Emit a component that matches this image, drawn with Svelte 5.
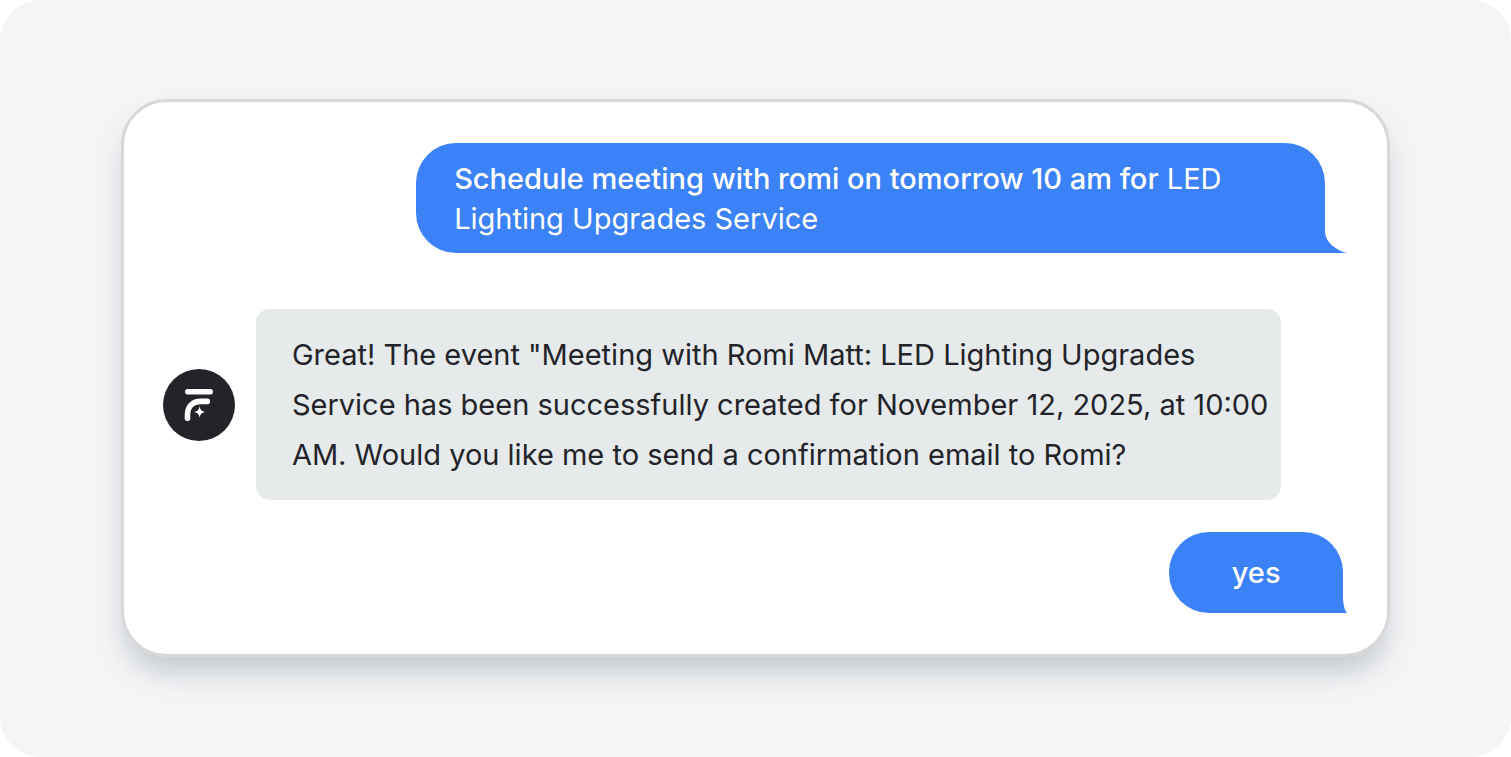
<script lang="ts">
	interface Message {
		from: 'user' | 'bot';
		strong?: string;
		lines: string[];
		short?: boolean;
	}

	const messages: Message[] = [
		{
			from: 'user',
			strong: 'Schedule meeting with romi on tomorrow 10 am for',
			lines: ['LED', 'Lighting Upgrades Service']
		},
		{
			from: 'bot',
			lines: [
				'Great! The event "Meeting with Romi Matt: LED Lighting Upgrades',
				'Service has been successfully created for November 12, 2025, at 10:00',
				'AM. Would you like me to send a confirmation email to Romi?'
			]
		},
		{ from: 'user', strong: 'yes', lines: [], short: true }
	];
</script>

<main>
	<section class="chat" aria-label="Chat">
		{#each messages as message}
			<div class="row {message.from}">
				{#if message.from === 'bot'}
					<svg class="avatar" viewBox="0 0 72 72" role="img" aria-label="Assistant">
						<circle cx="36" cy="36" r="36" fill="#232429" />
						<g fill="none" stroke="#fff" stroke-width="5.6" stroke-linecap="round">
							<path d="M24.8 22.8H47.2" />
							<path d="M24.5 49.2V46C24.5 37.5 29.5 32.4 38 32.4H44.3" />
						</g>
						<path
							fill="#fff"
							d="M36.6 37.2C37.5 41.2 38.3 42 42.2 42.9C38.3 43.8 37.5 44.6 36.6 48.6C35.7 44.6 34.9 43.8 31 42.9C34.9 42 35.7 41.2 36.6 37.2Z"
						/>
					</svg>
				{/if}
				<p class="bubble" class:short={message.short}>
					{#if message.strong}<strong>{message.strong}</strong>{' '}{/if}
					{#each message.lines as line, i}{#if i}<br />{/if}{line}{/each}
				</p>
				{#if message.from === 'user'}
					{#if message.short}
						<svg class="tail" width="5" height="18" viewBox="0 0 5 18">
							<path d="M0 0H1C1 8 2 14 5 18H0Z" />
						</svg>
					{:else}
						<svg class="tail" width="23" height="22" viewBox="0 0 23 22">
							<path d="M0 0H1C1 11 11 19 23 22H0Z" />
						</svg>
					{/if}
				{/if}
			</div>
		{/each}
	</section>
</main>

<style>
	:global(body) {
		margin: 0;
		background: #fff;
	}

	main {
		box-sizing: border-box;
		min-height: 100vh;
		padding: 99px 8%;
		background: #f4f5f7;
		border-radius: 40px;
		font-family: Inter, 'Liberation Sans', sans-serif;
		font-size: 29px;
	}

	.chat {
		box-sizing: border-box;
		padding: 41px 40px 41px 39px;
		background: #fff;
		border: 3px solid #d8d8da;
		border-radius: 46px;
		box-shadow:
			0 20px 24px -8px rgba(0, 0, 0, 0.1),
			0 18px 32px rgba(80, 100, 105, 0.14);
	}

	.row {
		display: flex;
		align-items: center;
	}

	.user {
		justify-content: flex-end;
		align-items: flex-end;
	}

	.bot {
		gap: 21px;
		margin: 56px 0 32px;
	}

	.avatar {
		flex: none;
		width: 72px;
		height: 72px;
	}

	.bubble {
		box-sizing: border-box;
		margin: 0;
	}

	.user .bubble {
		width: 909px;
		padding: 16px 38px 14px;
		background: #3b82f6;
		border-radius: 40px 40px 0 40px;
		color: #fff;
		line-height: 40px;
	}

	.user .short {
		width: 174px;
		padding: 21px 0 20px;
		text-align: center;
	}

	.bot .bubble {
		width: 1025px;
		padding: 21px 0 20px 36px;
		background: #e6eaeb;
		border-radius: 14px;
		color: #232429;
		line-height: 50px;
	}

	strong {
		font-weight: 500;
	}

	.tail {
		flex: none;
		margin-left: -1px;
		fill: #3b82f6;
	}
</style>
